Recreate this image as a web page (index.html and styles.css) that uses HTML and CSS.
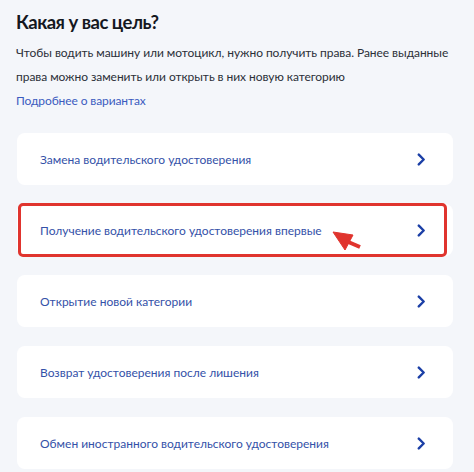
FILE: index.html
```html
<!DOCTYPE html>
<html lang="ru">
<head>
<meta charset="utf-8">
<link rel="stylesheet" href="styles.css">
</head>
<body>
<main class="page">
  <h1 class="title">Какая у вас цель?</h1>
  <p class="lead">Чтобы водить машину или мотоцикл, нужно получить права. Ранее выданные права можно заменить или открыть в них новую категорию</p>
  <a class="more" href="#">Подробнее о вариантах</a>
  <ul class="options">
    <li class="card"><span>Замена водительского удостоверения</span><svg class="chev" viewBox="0 0 8 12"><path d="M1.5 1.5 L6 6 L1.5 10.5"/></svg></li>
    <li class="card marked"><span>Получение водительского удостоверения впервые</span><svg class="chev" viewBox="0 0 8 12"><path d="M1.5 1.5 L6 6 L1.5 10.5"/></svg>
      <span class="frame"></span>
      <svg class="arrow" viewBox="0 0 32 26"><polygon points="2,4 22,7 14,22"/><line x1="15" y1="13" x2="29" y2="19"/></svg>
    </li>
    <li class="card"><span>Открытие новой категории</span><svg class="chev" viewBox="0 0 8 12"><path d="M1.5 1.5 L6 6 L1.5 10.5"/></svg></li>
    <li class="card"><span>Возврат удостоверения после лишения</span><svg class="chev" viewBox="0 0 8 12"><path d="M1.5 1.5 L6 6 L1.5 10.5"/></svg></li>
    <li class="card"><span>Обмен иностранного водительского удостоверения</span><svg class="chev" viewBox="0 0 8 12"><path d="M1.5 1.5 L6 6 L1.5 10.5"/></svg></li>
  </ul>
</main>
</body>
</html>
```
FILE: styles.css
```css
* { box-sizing: border-box; }
html, body { margin: 0; padding: 0; }
body {
  background: #f4f6fa;
  font-family: Lato, "Noto Sans", sans-serif;
  color: #1f2430;
  width: 474px;
  height: 472px;
  overflow: hidden;
}
.page {
  padding: 9px 21px 0 16px;
  display: flex;
  flex-direction: column;
}
.title {
  margin: 0;
  font-size: 18.5px;
  font-weight: 700;
  letter-spacing: -0.5px;
  line-height: 26px;
  color: #14181f;
}
.lead {
  margin: 6px 0 0;
  font-size: 12px;
  letter-spacing: -0.05px;
  line-height: 24px;
  color: #2b2f38;
}
.more {
  align-self: flex-start;
  margin-top: 3px;
  font-size: 12px;
  letter-spacing: -0.1px;
  line-height: 18px;
  color: #3b5bbf;
  text-decoration: none;
}
.options {
  list-style: none;
  margin: 23px 0 0;
  padding: 0 0 0 1px;
  display: flex;
  flex-direction: column;
  gap: 19px;
}
.card {
  position: relative;
  height: 52px;
  background: #fff;
  border-radius: 8px;
  display: flex;
  align-items: center;
  justify-content: space-between;
  padding: 0 27px 0 23px;
  font-size: 12px;
  color: #3451a8;
}
.chev {
  width: 9px;
  height: 13px;
  fill: none;
  stroke: #1b3fa6;
  stroke-width: 2.2;
  stroke-linecap: round;
  stroke-linejoin: round;
}
.frame {
  position: absolute;
  left: 1px;
  right: 6px;
  top: -1px;
  bottom: -1px;
  border: 3px solid #e0342e;
  border-radius: 5px;
  pointer-events: none;
}
.arrow {
  position: absolute;
  left: 314px;
  top: 24px;
  width: 32px;
  height: 26px;
  fill: #e0342e;
  stroke: #e0342e;
}
.arrow polygon { stroke-width: 1; stroke-linejoin: round; }
.arrow line { stroke-width: 4; }
```
